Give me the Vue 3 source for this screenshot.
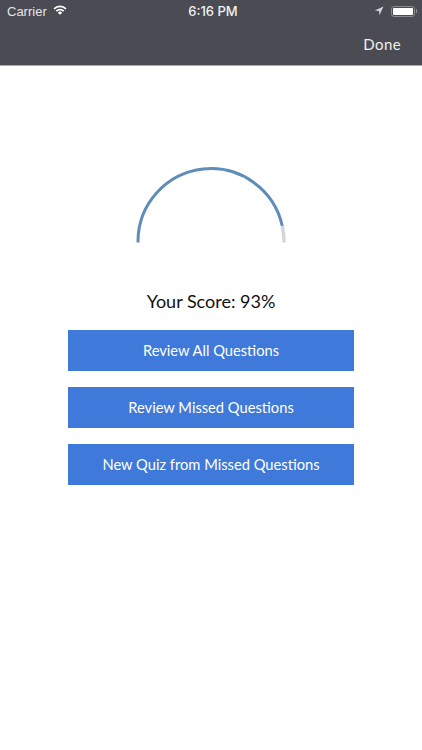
<script setup>
const buttons = ['Review All Questions', 'Review Missed Questions', 'New Quiz from Missed Questions']
</script>

<template>
  <div class="screen">
    <header class="nav">
      <div class="status">
        <div class="status-left">
          <span>Carrier</span>
          <svg class="wifi" width="14" height="10" viewBox="0 0 15 11">
            <path d="M0.3 3.6 A10.2 10.2 0 0 1 14.7 3.6 L13.3 5 A8.2 8.2 0 0 0 1.7 5 Z" fill="#fff" />
            <path d="M2.7 6 A6.8 6.8 0 0 1 12.3 6 L10.9 7.4 A4.8 4.8 0 0 0 4.1 7.4 Z" fill="#fff" />
            <path d="M5.1 8.4 A3.4 3.4 0 0 1 9.9 8.4 L7.5 10.8 Z" fill="#fff" />
          </svg>
        </div>
        <span class="time">6:16 PM</span>
        <div class="status-right">
          <svg width="10" height="10" viewBox="0 0 10 10">
            <path d="M9.5 0.5 L0.8 4.6 L5 5 L5.4 9.3 Z" fill="#d4d4d6" />
          </svg>
          <div class="battery"><div class="battery-fill"></div></div>
          <div class="battery-cap"></div>
        </div>
      </div>
      <div class="nav-bar"><span class="done">Done</span></div>
    </header>
    <main class="content">
      <svg class="gauge" width="160" height="90" viewBox="0 0 160 90">
        <path d="M7 85.5 V84.5 A73 73 0 0 1 151.3 69" fill="none" stroke="#5f8db8" stroke-width="3" />
        <path d="M151.3 69 A73 73 0 0 1 153 84.5 V85.5" fill="none" stroke="#d6d6d6" stroke-width="3.4" />
      </svg>
      <p class="score">Your Score: 93%</p>
      <div class="actions">
        <button v-for="label in buttons" :key="label" class="action">{{ label }}</button>
      </div>
    </main>
  </div>
</template>

<style scoped>
.screen {
  width: 422px;
  height: 750px;
  background: #fff;
  font-family: Lato, "Open Sans", sans-serif;
  overflow: hidden;
}
.nav {
  height: 66px;
  background: #4a4b53;
  color: #fff;
  box-sizing: border-box;
  border-bottom: 1px solid #a9a9ab;
}
.status {
  height: 21px;
  box-sizing: border-box;
  padding: 1px 5px 0 7px;
  display: grid;
  grid-template-columns: 1fr auto 1fr;
  align-items: center;
  font-family: "Liberation Sans", sans-serif;
  font-size: 13px;
}
.status-left {
  display: flex;
  align-items: center;
  gap: 6px;
  color: #e6e6e8;
}
.wifi { margin-top: -2px; }
.time {
  font-family: Inter, "Liberation Sans", sans-serif;
  font-weight: 500;
  font-size: 13px;
  color: #f2f2f3;
  margin-left: 2px;
}
.status-right {
  display: flex;
  align-items: center;
  justify-content: flex-end;
  gap: 7px;
}
.battery {
  width: 24px;
  height: 11px;
  box-sizing: border-box;
  border: 1px solid #8a8b90;
  border-radius: 3px;
  padding: 1px;
}
.battery-fill { height: 100%; background: #fff; border-radius: 1px; }
.battery-cap {
  width: 1.5px;
  height: 4px;
  background: #8a8b90;
  margin-left: -6px;
}
.nav-bar {
  height: 44px;
  display: flex;
  align-items: center;
  justify-content: flex-end;
  padding: 1px 21px 0 0;
  box-sizing: border-box;
}
.done { font-size: 15px; letter-spacing: 0.4px; color: #f0f0f1; }
.content {
  display: flex;
  flex-direction: column;
  align-items: center;
  padding-top: 91px;
}
.gauge { display: block; filter: blur(0.4px); }
.score {
  margin: 42px 0 0;
  font-size: 18px;
  line-height: 24px;
  color: #111;
}
.actions {
  margin-top: 17px;
  display: flex;
  flex-direction: column;
  gap: 16px;
}
.action {
  width: 286px;
  height: 41px;
  border: none;
  padding: 0 0 2px;
  background: #3f79d9;
  color: #fff;
  font-family: inherit;
  font-size: 14.7px;
}
</style>
